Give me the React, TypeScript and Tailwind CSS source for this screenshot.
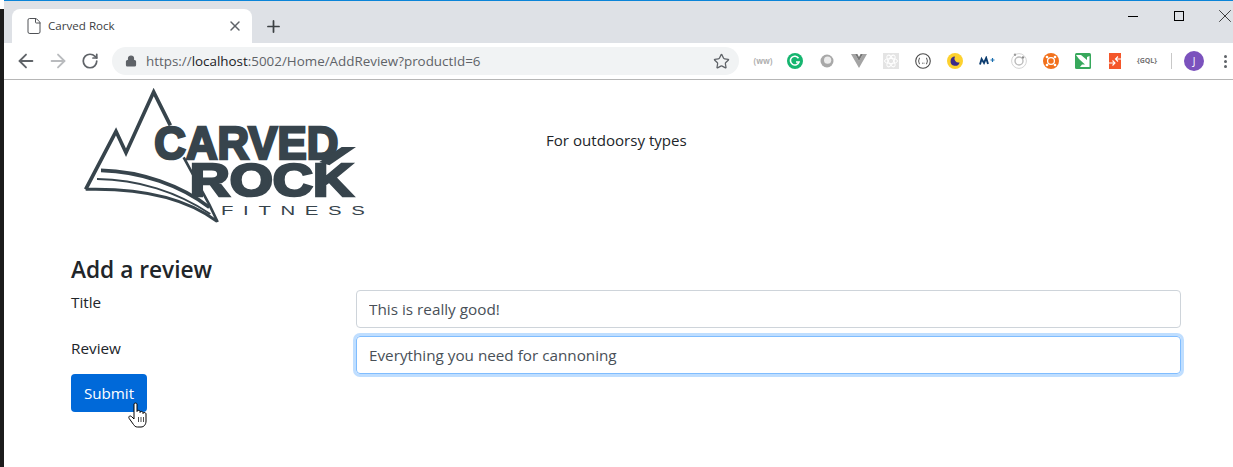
import React from 'react';
import { ArrowLeft, ArrowRight, RotateCw, Lock, Star, Plus, X, File } from 'lucide-react';

function Logo() {
  return (
    <svg width="310" height="145" viewBox="0 0 930 435" fill="none">
      <g stroke="#37444c" strokeLinejoin="miter">
        <path d="M44 322 L135 148 L165 212 L248 30 L298 130" strokeWidth="11" />
        <path d="M338 226 L415 368 L440 420" strokeWidth="8" />
        <path d="M90 265 C210 268 330 310 415 376" strokeWidth="11" />
        <path d="M78 291 C200 292 320 330 418 396" strokeWidth="6" />
        <path d="M44 322 C200 318 340 345 438 418" strokeWidth="9" />
      </g>
      <text x="250" y="230" fontSize="139" textLength="552" lengthAdjust="spacingAndGlyphs" fill="#37444c" stroke="#37444c" strokeWidth="8" className="font-['Liberation_Sans'] font-bold">CARVED</text>
      <text x="356" y="341" fontSize="139" textLength="490" lengthAdjust="spacingAndGlyphs" fill="#37444c" stroke="#37444c" strokeWidth="8" className="font-['Liberation_Sans'] font-bold">ROCK</text>
      <path d="M745 240 L812 195 L855 195 L775 250 Z" fill="#37444c" />
      <text transform="translate(450 398) scale(1.7 1)" fontSize="36" textLength="254" lengthAdjust="spacing" fill="#37444c" className="font-['Liberation_Sans']">FITNESS</text>
    </svg>
  );
}

const extensionIcons = [
  <span key="wu" className="text-[8px] font-bold text-[#b0b0b0]">{'(\u0077\u0077)'}</span>,
  <svg key="grammarly" width="16" height="16" viewBox="0 0 16 16">
    <circle cx="8" cy="8" r="8" fill="#15b56f" />
    <path d="M11.5 5.2 A4.4 4.4 0 1 0 12 9 L9 9" stroke="#fff" strokeWidth="1.6" fill="none" />
  </svg>,
  <svg key="ring" width="14" height="14" viewBox="0 0 14 14">
    <circle cx="7" cy="7" r="6.5" fill="#a8a8a8" />
    <circle cx="7.6" cy="6.2" r="3.6" fill="#ececec" />
  </svg>,
  <svg key="vue" width="16" height="14" viewBox="0 0 16 14">
    <path d="M0 0 H4 L8 7 L12 0 H16 L8 14 Z" fill="#a4a4a4" />
    <path d="M4 0 H6.4 L8 3 L9.6 0 H12 L8 7 Z" fill="#777" />
  </svg>,
  <svg key="atom" width="16" height="16" viewBox="0 0 16 16">
    <rect width="16" height="16" fill="#e4e4e4" />
    <g stroke="#fff" fill="none" strokeWidth="1">
      <ellipse cx="8" cy="8" rx="6.5" ry="2.6" />
      <ellipse cx="8" cy="8" rx="6.5" ry="2.6" transform="rotate(60 8 8)" />
      <ellipse cx="8" cy="8" rx="6.5" ry="2.6" transform="rotate(120 8 8)" />
    </g>
  </svg>,
  <svg key="braces" width="16" height="16" viewBox="0 0 16 16">
    <circle cx="8" cy="8" r="7.3" fill="#fff" stroke="#4a4a4a" strokeWidth="1.1" />
    <path d="M5 5 Q4 5 4 6.5 Q4 8 3.3 8 Q4 8 4 9.5 Q4 11 5 11 M11 5 Q12 5 12 6.5 Q12 8 12.7 8 Q12 8 12 9.5 Q12 11 11 11 M7 10.2 H7.8 M8.6 10.2 H9.4" stroke="#333" strokeWidth="0.9" fill="none" />
  </svg>,
  <svg key="moon" width="16" height="16" viewBox="0 0 16 16">
    <circle cx="8" cy="8" r="8" fill="#fdd12f" />
    <path d="M8 3.6 A4.6 4.6 0 1 0 12.6 9.4 A4 4 0 0 1 8 3.6 Z" fill="#3b2a8c" />
  </svg>,
  <svg key="mplus" width="16" height="10" viewBox="0 0 16 10">
    <path d="M1 8.5 L2.6 3 L5 7 L7.2 2 L9 8" stroke="#0b3c6f" strokeWidth="1.9" fill="none" />
    <path d="M11.5 4 H15.5 M13.5 2 V6" stroke="#1c6fb0" strokeWidth="1.2" />
  </svg>,
  <svg key="target" width="16" height="16" viewBox="0 0 16 16" fill="none">
    <circle cx="8" cy="8" r="7.4" stroke="#d4d4d4" />
    <circle cx="8" cy="8" r="4" stroke="#bdbdbd" strokeWidth="1.4" />
    <circle cx="4" cy="1.8" r="1.2" fill="#9c9c9c" />
    <circle cx="12" cy="4.4" r="1.2" fill="#8a8a8a" />
  </svg>,
  <svg key="lifebuoy" width="16" height="16" viewBox="0 0 16 16">
    <circle cx="8" cy="8" r="8" fill="#f2711c" />
    <circle cx="8" cy="8" r="3.4" fill="none" stroke="#fff" strokeWidth="1.3" />
    <g fill="#fff">
      <circle cx="4" cy="4" r="1.3" />
      <circle cx="12" cy="4" r="1.3" />
      <circle cx="4" cy="12" r="1.3" />
      <circle cx="12" cy="12" r="1.3" />
    </g>
  </svg>,
  <svg key="arrow" width="16" height="16" viewBox="0 0 16 16">
    <rect width="16" height="16" rx="1.5" fill="#37a85c" />
    <path d="M1 2 H6 L12 7 V4 L14.5 3 V14 H5 L7 11.5 H10 L4 6 Z" fill="#fff" />
  </svg>,
  <svg key="swap" width="12" height="16" viewBox="0 0 12 16">
    <rect width="12" height="16" fill="#f4562a" />
    <path d="M6 6 H12 M9 3.5 L6.5 6 L9 8.5 M0 10 H6 M3.5 7.5 L6 10 L3.5 12.5" stroke="#fff" strokeWidth="1.1" fill="none" />
  </svg>,
  <span key="gql" className="text-[7px] font-bold text-[#777]">{'{GQL}'}</span>,
];

function BrowserChrome() {
  return (
    <div className="flex flex-col">
      <div className="h-[1px] bg-[#0a84d8]" />
      <div className="flex h-[42px] bg-[#dee1e6]">
        <div className="mt-[8px] ml-[8px] flex h-[34px] w-[240px] items-center rounded-t-[8px] bg-white pl-[13px] pr-[9px]">
          <File size={18} strokeWidth={1.3} className="text-[#4a4d51]" />
          <span className="ml-[5px] flex-1 text-[11.6px] text-[#3c4043]">Carved Rock</span>
          <X size={16} strokeWidth={2.2} className="text-[#5f6368]" />
        </div>
        <div className="ml-[12px] mt-[8px] flex h-[34px] items-center">
          <Plus size={19} strokeWidth={2.2} className="text-[#3c4043]" />
        </div>
        <div className="ml-auto mr-[-15px] flex h-[30px] items-center text-black">
          <div className="flex w-[46px] justify-center"><div className="h-[1px] w-[10px] bg-black" /></div>
          <div className="flex w-[46px] justify-center"><div className="h-[10px] w-[10px] border border-black" /></div>
          <div className="flex w-[46px] justify-center"><X size={22} strokeWidth={0.8} /></div>
        </div>
      </div>
      <div className="flex h-[37px] items-center border-b border-[#b6b6b6] bg-white">
        <div className="flex w-[108px] items-center pl-[6px]">
          <div className="flex w-[32px] justify-center"><ArrowLeft size={22} strokeWidth={2} className="text-[#5f6368]" /></div>
          <div className="flex w-[32px] justify-center"><ArrowRight size={22} strokeWidth={2} className="text-[#b9bbbe]" /></div>
          <div className="flex w-[32px] justify-center"><RotateCw size={18} strokeWidth={2.3} className="text-[#5f6368]" /></div>
        </div>
        <div className="flex h-[28px] w-[627px] items-center rounded-full bg-[#f1f3f4] pl-[13px] pr-[9px]">
          <Lock size={12} strokeWidth={2.4} className="fill-[#5f6368] text-[#5f6368]" />
          <span className="ml-[9px] flex-1 text-[13.4px] text-[#5f6368]">
            https://<span className="text-[#202124]">localhost</span>:5002/Home/AddReview?productId=6
          </span>
          <Star size={17} strokeWidth={1.8} className="text-[#5f6368]" />
        </div>
        <div className="ml-[8px] flex items-center">
          {extensionIcons.map((icon, i) => (
            <div key={i} className="flex w-[32px] justify-center">{icon}</div>
          ))}
          <div className="ml-[8px] h-[16px] w-[1px] bg-[#c8c8c8]" />
          <div className="ml-[12px] flex h-[20px] w-[20px] items-center justify-center rounded-full bg-[#7b52bd] text-[10px] text-white">J</div>
          <div className="ml-[20px] flex flex-col gap-[2px]">
            <div className="h-[3px] w-[3px] rounded-full bg-[#5f6368]" />
            <div className="h-[3px] w-[3px] rounded-full bg-[#5f6368]" />
            <div className="h-[3px] w-[3px] rounded-full bg-[#5f6368]" />
          </div>
        </div>
      </div>
    </div>
  );
}

function HandCursor() {
  return (
    <svg width="20" height="26" viewBox="0 0 20 26" className="absolute left-[57px] top-[28px]">
      <path
        d="M6 2 C6 .8 9 .8 9 2 V9.5 C9 8 12 8 12 9.5 V10.5 C12 9 15 9 15 10.8 V11.5 C15 10 18 10.2 18 12 V19 C18 22.5 16 25 13 25 H9.5 C7.5 25 6.5 24 5.5 22.5 L1.2 16.5 C0 14.5 2 13 3.8 14.8 L6 17 Z"
        fill="#fff"
        stroke="#000"
        strokeWidth="1"
      />
      <path d="M10.5 15 V20 M13 15 V20 M15.5 15 V20" stroke="#000" strokeWidth="0.7" />
    </svg>
  );
}

export default function App() {
  return (
    <div className="flex h-[467px] w-[1233px] overflow-hidden bg-white font-['Open_Sans',sans-serif] text-[#212529]">
      <div className="mt-[9px] w-[4px] bg-[#1c1c1c]" />
      <div className="flex min-w-0 flex-1 flex-col overflow-hidden">
        <BrowserChrome />

        {/* Page header */}
        <div className="flex items-start pl-[67px] pt-[2px]">
          <div className="w-[475px]"><Logo /></div>
          <p className="mt-[46px] text-[15.1px] leading-[24px]">For outdoorsy types</p>
        </div>

        {/* Review form */}
        <div className="pl-[67px] pr-[52px] pt-[28px]">
          <h4 className="text-[22.7px] font-semibold leading-[29px]">Add a review</h4>
          <div className="mt-[6px] flex flex-col gap-[8px]">
            <div className="flex">
              <label className="w-[285px] text-[15.3px] leading-[24px]">Title</label>
              <input
                readOnly
                value="This is really good!"
                className="h-[38px] flex-1 rounded-[4px] border border-[#ced4da] px-[12px] text-[15.3px] text-[#495057] outline-none"
              />
            </div>
            <div className="flex">
              <label className="w-[285px] text-[15.3px] leading-[24px]">Review</label>
              <input
                readOnly
                value="Everything you need for cannoning"
                className="h-[38px] flex-1 rounded-[4px] border border-[#80bdff] px-[12px] text-[15.25px] text-[#495057] shadow-[0_0_0_3px_rgba(0,123,255,0.25)] outline-none"
              />
            </div>
          </div>
          <div className="relative w-fit">
            <button className="h-[38px] w-[76px] rounded-[4px] bg-[#0069d9] text-[15.2px] text-white">Submit</button>
            <HandCursor />
          </div>
        </div>
      </div>
    </div>
  );
}
